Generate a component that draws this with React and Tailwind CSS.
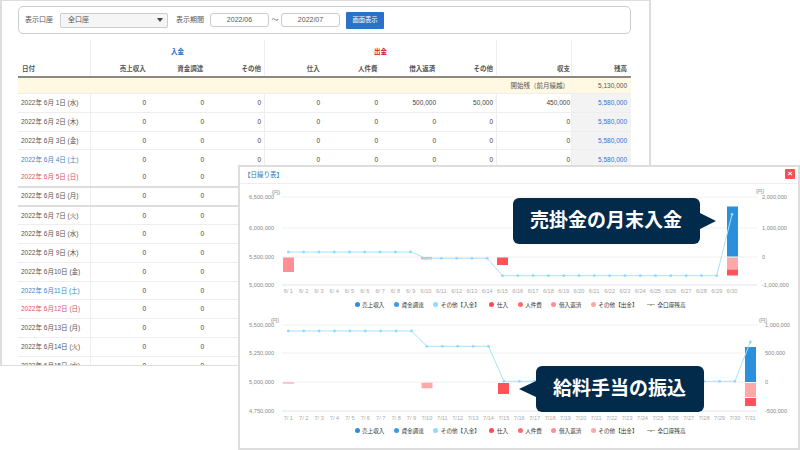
const WEEK = ['水', '木', '金', '土', '日', '月', '火']

// 6月の明細。6/1 だけ実績あり、残りはゼロ行
const rows = Array.from({ length: 15 }, (_, i) => {
  const day = i + 1
  const wd = WEEK[i % 7]
  const first = i === 0
  return {
    date: `2022年 6月${day < 10 ? ' ' + day : day}日 (${wd})`,
    wd,
    cells: first
      ? ['0', '0', '0', '0', '0', '500,000', '50,000', '450,000']
      : ['0', '0', '0', '0', '0', '0', '0', '0'],
    balance: '5,580,000',
    thick: day === 5 || day === 6,
    noLine: day === 4,
    lifted: day === 5,
  }
})

const GRID = 'grid grid-cols-[73px_58px_58px_58px_58px_58px_58px_58px_75px_59px]'

function dateColor(wd) {
  if (wd === '土') return 'text-[#3d86c6]'
  if (wd === '日') return 'text-[#d4566a]'
  return 'text-[#555]'
}

function FilterBar() {
  return (
    <div className="ml-[16px] mt-[5px] flex h-[28px] w-[613px] items-center rounded-[5px] border border-[#ccc] pl-[6px] text-[#555]">
      <span className="w-[35px] text-[7px]">表示口座</span>
      <div className="flex h-[15px] w-[108px] items-center justify-between rounded-[2px] border border-[#ccc] bg-[#f5f5f5] pl-[7px] pr-[4px] text-[7px]">
        <span>全口座</span>
        <span className="h-0 w-0 border-x-[3px] border-t-[4px] border-x-transparent border-t-[#444]" />
      </div>
      <span className="ml-[8px] w-[34px] text-[7px]">表示期間</span>
      <div className="flex h-[14px] w-[59px] items-center justify-center rounded-[3px] border border-[#ccc] text-[7px]">2022/06</div>
      <span className="w-[12px] text-center text-[7px]">～</span>
      <div className="flex h-[14px] w-[59px] items-center justify-center rounded-[3px] border border-[#ccc] text-[7px]">2022/07</div>
      <button className="ml-[6px] h-[17px] w-[38px] rounded-[1px] bg-[#2a72c8] text-[6.3px] text-white">画面表示</button>
    </div>
  )
}

function Head() {
  const labels = ['売上収入', '資金調達', 'その他', '仕入', '人件費', '借入返済', 'その他', '収支', '残高']
  return (
    <div className="h-[38px] border-b-2 border-[#8a8a80] text-[6.5px] font-bold text-[#555]">
      <div className={`${GRID} h-[36px]`}>
        <div className="flex items-end border-r border-[#eee] pb-[2px] pl-[4px]">日付</div>
        <div className="col-span-3 flex flex-col border-r border-[#eee]">
          <div className="pt-[7px] text-center text-[#2272c0]">入金</div>
          <div className="mt-auto grid grid-cols-3 pb-[2px] text-right">
            <span className="pr-[3px]">{labels[0]}</span>
            <span className="pr-[3px]">{labels[1]}</span>
            <span className="pr-[3px]">{labels[2]}</span>
          </div>
        </div>
        <div className="col-span-4 flex flex-col border-r border-[#eee]">
          <div className="pt-[7px] text-center text-[#d4202c]">出金</div>
          <div className="mt-auto grid grid-cols-4 pb-[2px] text-right">
            <span className="pr-[3px]">{labels[3]}</span>
            <span className="pr-[3px]">{labels[4]}</span>
            <span className="pr-[3px]">{labels[5]}</span>
            <span className="pr-[3px]">{labels[6]}</span>
          </div>
        </div>
        <div className="flex items-end justify-end border-r border-[#eee] pb-[2px] pr-[1px]">{labels[7]}</div>
        <div className="flex items-end justify-end pb-[2px] pr-[4px]">{labels[8]}</div>
      </div>
    </div>
  )
}

function Row({ row }) {
  const line = row.noLine ? '' : row.thick ? 'border-b-2 border-[#ddd]' : 'border-b border-[#eee]'
  return (
    <div className={`${GRID} h-[18.75px] text-[6.5px] text-[#444] ${line}`}>
      <div className={`flex items-center whitespace-pre border-r border-[#eee] pl-[3px] ${dateColor(row.wd)} ${row.lifted ? 'pb-[2px]' : ''}`}>
        {row.date}
      </div>
      {row.cells.map((c, i) => (
        <div
          key={i}
          className={`flex items-center justify-end ${i === 7 ? 'pr-[1px]' : 'pr-[3px]'} ${i === 2 || i === 6 || i === 7 ? 'border-r border-[#eee]' : ''} ${row.lifted ? 'pb-[2px]' : ''}`}
        >
          {c}
        </div>
      ))}
      <div className={`flex items-center justify-end bg-[#f3f3f3] pr-[4px] text-[#2f74d0] ${row.lifted ? 'pb-[2px]' : ''}`}>
        {row.balance}
      </div>
    </div>
  )
}

function Ledger() {
  return (
    <div className="h-[366px] w-[651px] overflow-hidden border-x-2 border-y border-[#ddd] bg-white">
      <FilterBar />
      <div className="ml-[16px] mt-[6px] w-[613px]">
        <Head />
        <div className={`${GRID} h-[16px] border-b border-[#eee] bg-[#fff9e3] text-[6.5px] text-[#555]`}>
          <div className="col-span-9 flex items-center justify-end pr-[3px]">開始残（前月繰越）</div>
          <div className="flex items-center justify-end pr-[4px]">5,130,000</div>
        </div>
        {rows.map((r) => (
          <Row key={r.date} row={r} />
        ))}
      </div>
    </div>
  )
}

const BLUE = '#2b8fdc'
const RED = '#ff5358'
const PINK = '#ff8f94'
const LIGHT = '#ffa8a8'
const LINE = '#a6e3ff'
const DOT = '#8cdcff'

// 座標はスクリーンショット上のピクセルそのまま（viewBox で合わせる）
function Chart({ top, height, month, count, x0, step, gridYs, leftLabels, rightLabels, rightX, unitL, unitR, labelY, line, bars }) {
  const xs = Array.from({ length: count }, (_, i) => x0 + step * i)
  const points = xs.map((x, i) => `${x},${line(i)}`).join(' ')
  return (
    <svg viewBox={`240 ${top} 558 ${height}`} className="block" width="558" height={height} fontFamily="'Liberation Sans','Noto Sans CJK JP',sans-serif">
      {gridYs.map((y, i) => (
        <line key={y} x1="282" x2="757" y1={y} y2={y} stroke={i === gridYs.length - 1 ? '#dfe3ee' : '#f0f0f0'} strokeWidth="1" />
      ))}
      {bars.map((b, i) => (
        <rect key={i} x={b[0]} y={b[1]} width="11" height={b[2]} fill={b[3]} />
      ))}
      <polyline points={points} fill="none" stroke={LINE} strokeWidth="1" />
      {xs.map((x, i) => (
        <circle key={i} cx={x} cy={line(i)} r="1.4" fill={DOT} />
      ))}
      {leftLabels.map((t, i) => (
        <text key={t} x="274" y={gridYs[i] + 2} textAnchor="end" fontSize="5.6" fill="#888">{t}</text>
      ))}
      {rightLabels.map((t, i) => (
        <text key={t} x={rightX} y={gridYs[i] + 2} fontSize="5.6" fill="#888">{t}</text>
      ))}
      <text x={unitL} y={top === 184 ? 194 : 322} fontSize="4.8" fill="#777">(円)</text>
      <text x={unitR} y={top === 184 ? 193 : 322} fontSize="4.8" fill="#777">(円)</text>
      {xs.map((x, i) => (
        <text key={i} x={x} y={labelY} textAnchor="middle" fontSize="5.6" fill="#aaa">
          {`${month}/${i < 9 ? '\u00a0' : ''}${i + 1}`}
        </text>
      ))}
    </svg>
  )
}

function Legend({ className }) {
  const items = [
    ['売上収入', 'bg-[#2b8fdc]'],
    ['資金調達', 'bg-[#3d9be2]'],
    ['その他【入金】', 'bg-[#8cdcff]'],
    ['仕入', 'bg-[#ff4b4f]'],
    ['人件費', 'bg-[#ff6b6f]'],
    ['借入返済', 'bg-[#ff8f94]'],
    ['その他【出金】', 'bg-[#ffa8a8]'],
  ]
  return (
    <div className={`flex h-[12px] items-center pl-[114.5px] text-[5.6px] text-[#333] ${className}`}>
      {items.map(([t, c]) => (
        <span key={t} className="mr-[9.5px] flex items-center gap-[2.5px]">
          <span className={`h-[5px] w-[5px] rounded-full ${c}`} />
          {t}
        </span>
      ))}
      <span className="flex items-center gap-[2.5px]">
        <span className="flex h-px w-[8px] items-center justify-center bg-[#b5b5a5]">
          <span className="h-[2px] w-[2px] rounded-full bg-[#a5a595]" />
        </span>
        全口座残高
      </span>
    </div>
  )
}

function ChartWindow() {
  return (
    <div className="absolute left-[238px] top-[165px] h-[285px] w-[562px] border-2 border-[#ddd] bg-white">
      <div className="flex h-[17px] items-center justify-between border-b border-[#eee] pl-[4px] pr-[3px] text-[6.5px] text-[#2a7ab8]">
        <span>【日繰り表】</span>
        <span className="mb-[2px] flex h-[10px] w-[10px] items-center justify-center rounded-[1px] bg-[#ff4d55] text-[8px] font-bold leading-none text-white">×</span>
      </div>
      <Chart
        top={184}
        height={115}
        month={6}
        count={30}
        x0={288.3}
        step={15.3}
        gridYs={[197, 228, 257, 285]}
        leftLabels={['6,500,000', '6,000,000', '5,500,000', '5,000,000']}
        rightLabels={['2,000,000', '1,000,000', '0', '-1,000,000']}
        rightX={762}
        unitL={272}
        unitR={756}
        labelY={293}
        line={(i) => (i < 9 ? 252 : i < 14 ? 258.3 : i < 29 ? 275.7 : 214.3)}
        bars={[
          [283, 257.5, 14.5, PINK],
          [421, 257, 2.5, LIGHT],
          [497, 257.5, 7.5, RED],
          [727, 206.5, 50, BLUE],
          [727, 257.5, 12, LIGHT],
          [727, 269.5, 6, RED],
        ]}
      />
      <Legend />
      <Chart
        top={311}
        height={113}
        month={7}
        count={31}
        x0={288.3}
        step={15.4}
        gridYs={[325, 353, 382, 411]}
        leftLabels={['5,500,000', '5,250,000', '5,000,000', '4,750,000']}
        rightLabels={['1,000,000', '500,000', '0', '-500,000']}
        rightX={765}
        unitL={271}
        unitR={759}
        labelY={420}
        line={(i) => (i < 9 ? 331 : i < 14 ? 346.3 : i < 30 ? 381.3 : 342)}
        bars={[
          [283, 382.5, 1, PINK],
          [421.5, 382.7, 5.6, LIGHT],
          [498, 383, 11, RED],
          [745, 347, 35, BLUE],
          [745, 383, 14, LIGHT],
          [745, 398, 8, RED],
        ]}
      />
      <Legend className="mt-[1px]" />
    </div>
  )
}

function Callout({ className, left, children }) {
  return (
    <div className={`absolute flex h-[46px] items-center ${className}`}>
      {left && <span className="h-0 w-0 border-y-[8px] border-r-[17px] border-y-transparent border-r-[#022b4b]" />}
      <div className="flex h-full items-center rounded-[6px] bg-[#022b4b] text-[19px] font-bold text-white">{children}</div>
      {!left && <span className="h-0 w-0 border-y-[8px] border-l-[16px] border-y-transparent border-l-[#022b4b]" />}
    </div>
  )
}

export default function App() {
  return (
    <div className="relative h-[450px] w-[800px] overflow-hidden bg-white font-['Liberation_Sans','Noto_Sans_CJK_JP',sans-serif]">
      <Ledger />
      <ChartWindow />
      <Callout className="left-[513px] top-[198px]">
        <span className="w-[187px] pl-[17px]">売掛金の月末入金</span>
      </Callout>
      <Callout className="left-[519px] top-[366px]" left>
        <span className="w-[168px] pl-[17px]">給料手当の振込</span>
      </Callout>
    </div>
  )
}
